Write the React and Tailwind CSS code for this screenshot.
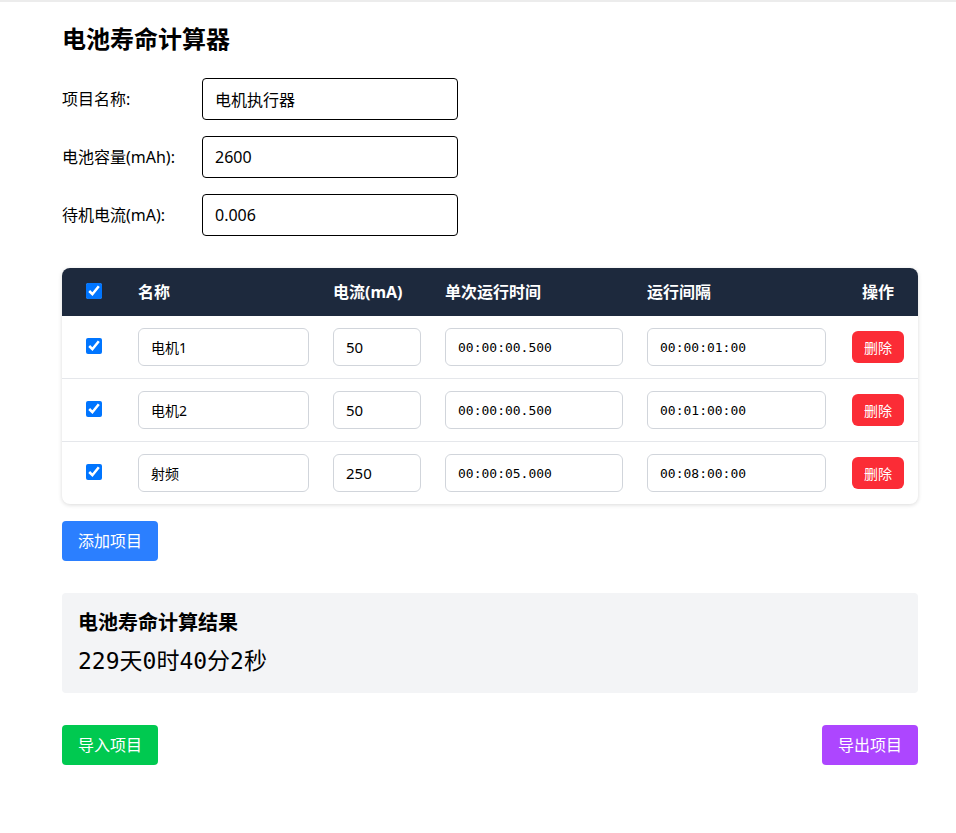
import React from "react";

const rows = [
  { name: "电机1", cur: "50", run: "00:00:00.500", gap: "00:00:01:00" },
  { name: "电机2", cur: "50", run: "00:00:00.500", gap: "00:01:00:00" },
  { name: "射频", cur: "250", run: "00:00:05.000", gap: "00:08:00:00" },
];

const font = { fontFamily: '"Noto Sans", "Noto Sans CJK SC", sans-serif' };

function FormRow({ label, value }) {
  return (
    <div className="flex items-center">
      <label className="w-[140px] text-[16px] text-black">{label}</label>
      <input
        defaultValue={value}
        className="w-[256px] h-[42px] border border-black rounded-[4px] px-3 text-[16px] text-black outline-none"
      />
    </div>
  );
}

export default function App() {
  return (
    <div className="min-h-[833px] bg-white border-t-2 border-[#ececec]" style={font}>
      <div className="pl-[62px] w-[918px] pt-[21px]">
        <h1 className="text-[24px] leading-[32px] font-bold text-black mb-[23px]">电池寿命计算器</h1>
        <div className="flex flex-col gap-4">
          <FormRow label="项目名称:" value="电机执行器" />
          <FormRow label="电池容量(mAh):" value="2600" />
          <FormRow label="待机电流(mA):" value="0.006" />
        </div>

        <div className="mt-8 rounded-lg overflow-hidden shadow-[0_1px_4px_rgba(0,0,0,0.15)] bg-white">
          <div className="grid grid-cols-[64px_195px_112px_202px_203px_80px] h-[48px] items-center bg-[#1d293d] text-white font-bold text-[16px]">
            <div className="flex justify-center -mt-[2px]">
              <input type="checkbox" defaultChecked className="w-4 h-4 accent-[#0075ff]" />
            </div>
            <div className="px-3">名称</div>
            <div className="px-3">电流(mA)</div>
            <div className="px-3">单次运行时间</div>
            <div className="px-3">运行间隔</div>
            <div className="px-3 text-center">操作</div>
          </div>
          {rows.map((r, i) => (
            <div
              key={i}
              className={`grid grid-cols-[64px_195px_112px_202px_203px_80px] items-center py-3 ${i < rows.length - 1 ? "border-b border-[#e5e7eb]" : ""}`}
            >
              <div className="flex justify-center -mt-[3px]">
                <input type="checkbox" defaultChecked className="w-4 h-4 accent-[#0075ff]" />
              </div>
              <div className="px-3">
                <input defaultValue={r.name} className="w-full h-[38px] border border-[#d1d5db] rounded-md px-3 text-[14px] text-black outline-none" />
              </div>
              <div className="px-3">
                <input defaultValue={r.cur} className="w-full h-[38px] border border-[#d1d5db] rounded-md px-3 text-[15px] text-black outline-none" />
              </div>
              <div className="px-3">
                <input
                  defaultValue={r.run}
                  className="w-full h-[38px] border border-[#d1d5db] rounded-md px-3 text-[13px] text-black outline-none"
                  style={{ fontFamily: '"DejaVu Sans Mono", monospace' }}
                />
              </div>
              <div className="px-3">
                <input
                  defaultValue={r.gap}
                  className="w-full h-[38px] border border-[#d1d5db] rounded-md px-3 text-[13px] text-black outline-none"
                  style={{ fontFamily: '"DejaVu Sans Mono", monospace' }}
                />
              </div>
              <div className="flex justify-center">
                <button className="w-[52px] h-[32px] rounded-md bg-[#fb2c36] text-white text-[14px]">删除</button>
              </div>
            </div>
          ))}
        </div>

        <button className="mt-[17px] w-[96px] h-[40px] rounded bg-[#2b7fff] text-white text-[16px]">添加项目</button>

        <div className="mt-8 bg-[#f3f4f6] rounded px-4 pt-4 pb-[18px]">
          <div className="text-[20px] leading-[28px] font-bold text-black">电池寿命计算结果</div>
          <div
            className="mt-[10px] text-[23px] leading-[28px] text-black"
            style={{ fontFamily: '"DejaVu Sans Mono", "Noto Sans CJK SC", monospace' }}
          >
            229天0时40分2秒
          </div>
        </div>

        <div className="mt-8 flex justify-between">
          <button className="w-[96px] h-[40px] rounded bg-[#00c950] text-white text-[16px]">导入项目</button>
          <button className="w-[96px] h-[40px] rounded bg-[#ad46ff] text-white text-[16px]">导出项目</button>
        </div>
      </div>
    </div>
  );
}
